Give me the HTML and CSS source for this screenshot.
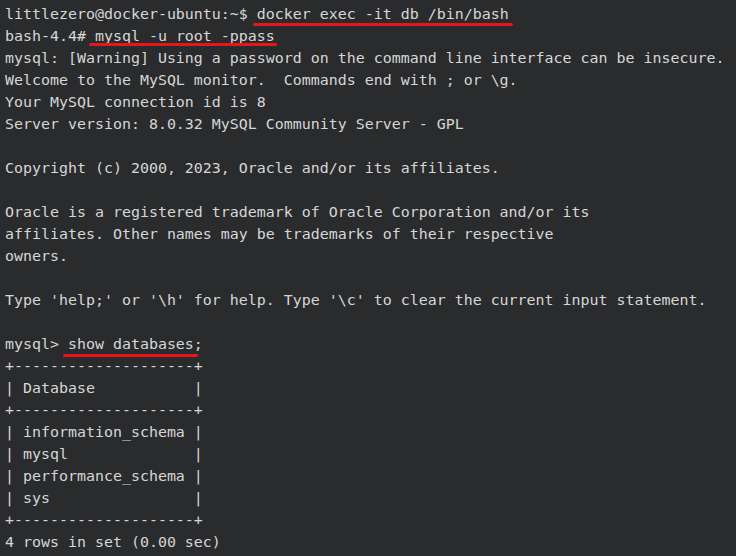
FILE: index.html
```html
<!DOCTYPE html>
<html lang="en">
<head>
<meta charset="utf-8">
<title>Terminal</title>
<link rel="stylesheet" href="styles.css">
</head>
<body>
<main class="terminal">
<pre class="out">littlezero@docker-ubuntu:~$ <span class="mark mark-a">docker exec -it db /bin/bash</span>
bash-4.4# <span class="mark mark-b">mysql -u root -ppass</span>
mysql: [Warning] Using a password on the command line interface can be insecure.
Welcome to the MySQL monitor.  Commands end with ; or \g.
Your MySQL connection id is 8
Server version: 8.0.32 MySQL Community Server - GPL

Copyright (c) 2000, 2023, Oracle and/or its affiliates.

Oracle is a registered trademark of Oracle Corporation and/or its
affiliates. Other names may be trademarks of their respective
owners.

Type 'help;' or '\h' for help. Type '\c' to clear the current input statement.

mysql&gt; <span class="mark mark-c">show databases</span>;
+--------------------+
| Database           |
+--------------------+
| information_schema |
| mysql              |
| performance_schema |
| sys                |
+--------------------+
4 rows in set (0.00 sec)</pre>
</main>
</body>
</html>
```
FILE: styles.css
```css
html, body {
  margin: 0;
  padding: 0;
  background: #2a2b2d;
  height: 100%;
  overflow: hidden;
}

.terminal {
  padding: 3px 0 0 5px;
}

.out {
  margin: 0;
  font-family: "DejaVu Sans Mono", "Liberation Mono", monospace;
  font-size: 14.95px;
  line-height: 22px;
  color: #d6d6d6;
  white-space: pre;
}

.mark {
  position: relative;
}

.mark::after {
  content: "";
  position: absolute;
  height: 3px;
  background: #e3171c;
  border-radius: 1.5px;
}

.mark-a::after {
  left: -4px;
  right: -4px;
  bottom: -3px;
}

.mark-b::after {
  left: -6px;
  right: -2px;
  bottom: -1px;
}

.mark-c::after {
  left: -5px;
  right: -4px;
  bottom: -4px;
}
```
